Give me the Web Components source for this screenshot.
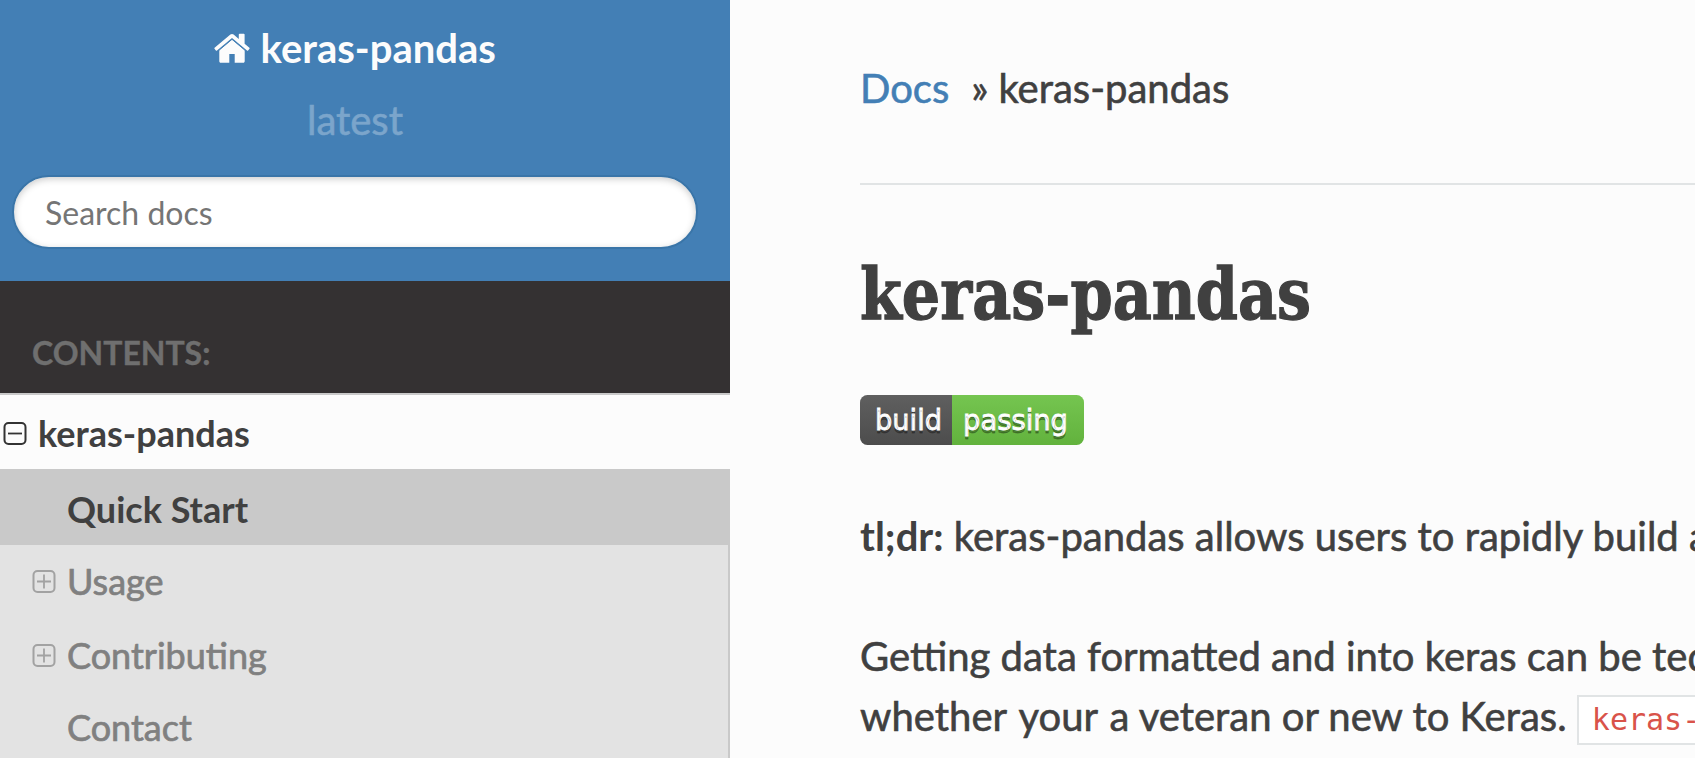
<!DOCTYPE html>
<html lang="en">
<head>
<meta charset="utf-8">
<title>keras-pandas</title>
<style>
html,body{margin:0;height:100%;overflow:hidden}
body{font-family:Lato,"Liberation Sans",sans-serif;font-size:40px;line-height:60px;color:#404040;background:#fcfcfc}
</style>
</head>
<body>
<docs-layout>
  <docs-sidebar slot="nav">
    <docs-search slot="head" project="keras-pandas" version="latest"></docs-search>
    <span slot="caption">Contents:</span>
    <toc-item level="1" icon="minus">keras-pandas</toc-item>
    <toc-item level="2" current>Quick Start</toc-item>
    <toc-item level="2" icon="plus" style="height:74px">Usage</toc-item>
    <toc-item level="2" icon="plus">Contributing</toc-item>
    <toc-item level="2">Contact</toc-item>
  </docs-sidebar>
  <docs-article></docs-article>
</docs-layout>
<script>
const define = (name, html, setup) => customElements.define(name, class extends HTMLElement {
  constructor(){ super(); this.attachShadow({mode:'open'}).innerHTML = html; }
  connectedCallback(){ if(setup) setup(this, this.shadowRoot); }
});

define('docs-layout', `<style>
:host{display:grid;grid-template-columns:730px 1fr;height:758px;overflow:hidden}
</style><slot name="nav"></slot><slot></slot>`);

define('docs-sidebar', `<style>
:host{display:flex;flex-direction:column;background:#e3e3e3;height:758px;overflow:hidden}
.cap{box-sizing:border-box;height:112px;padding:47px 0 0 32px;background:#343132;color:#6f6f6f;font-weight:700;font-size:32px;line-height:50px;text-transform:uppercase;-webkit-text-stroke:.4px;flex:none}
.menu{flex:1;min-height:0}
</style><slot name="head"></slot><div class="cap"><slot name="caption"></slot></div><div class="menu"><slot></slot></div>`);

define('docs-search', `<style>
:host{display:flex;flex-direction:column;box-sizing:border-box;height:281px;flex:none;background:#437fb5;padding:18px 24px 0 12px}
.title{display:flex;justify-content:center;align-items:center;height:60px;color:#fcfcfc;font-weight:700;margin-right:12px;margin-left:4px}
.title svg{width:36px;height:30px;margin:0 10.5px 1px 0}
.ver{height:60px;margin:12px 12px 0 4px;text-align:center;color:#7ba5cb;-webkit-text-stroke:.6px #7ba5cb}
.field{box-sizing:border-box;width:686px;height:74px;margin-top:25px;padding:0 31px;border:2px solid #3a75a8;border-radius:37px;background:#fff;box-shadow:inset 0 2px 7px #ccc;font:32px/72px Lato,sans-serif;color:#757575}
</style>
<div class="title"><svg viewBox="0 0 36 30"><path fill="#fcfcfc" d="M18 6.5 5.3 17v11.2c0 .9.6 1.5 1.4 1.5h8.6v-8.8h5.4v8.8h8.6c.8 0 1.4-.6 1.4-1.5V17z"/><path fill="#fcfcfc" d="m35.4 14.7-4.8-4V1.6c0-.5-.3-.8-.8-.8h-4.2c-.5 0-.8.3-.8.8v4.3l-5.2-4.4c-.9-.7-2.3-.7-3.2 0L.6 14.7c-.3.3-.4.7-.1 1.1l1.4 1.6c.3.3.8.4 1.1.1L18 5l15 12.5c.3.3.8.2 1.1-.1l1.4-1.6c.3-.4.2-.8-.1-1.1z"/><path fill="none" stroke="#437fb5" stroke-width="1" d="M4.6 17.6 18 6.3l13.4 11.3"/></svg><span id="p"></span></div>
<div class="ver" id="v"></div><div class="field">Search docs</div>`, (h, r) => {
  r.getElementById('p').textContent = h.getAttribute('project');
  r.getElementById('v').textContent = h.getAttribute('version');
});

define('toc-item', `<style>
:host{display:flex;align-items:flex-start;box-sizing:border-box;height:72px;padding:11px 0 0 32px;font-size:36px;line-height:50px;color:#808080;border-right:2px solid #c9c9c9;-webkit-text-stroke:.7px}
svg{width:24px;height:24px;flex:none;margin:14px 11px 0 0;stroke:#a2a2a2}
svg.none{visibility:hidden}
:host([level="1"]){height:76px;padding:13px 0 0 3px;border-top:2px solid #c9c9c9;border-right:0;background:#fcfcfc;color:#404040;font-weight:700;-webkit-text-stroke:0}
:host([level="1"]) svg{stroke:#333}
:host([current]){height:76px;padding-top:15px;background:#c9c9c9;color:#404040;font-weight:700;-webkit-text-stroke:0}
</style><svg viewBox="0 0 24 24" fill="none" stroke-width="2"><rect x="1.5" y="1" width="21" height="21" rx="4"/><path class="g" stroke-width="1.8"/></svg><slot></slot>`, (h, r) => {
  const icon = h.getAttribute('icon');
  if(!icon) r.querySelector('svg').classList.add('none');
  r.querySelector('.g').setAttribute('d', icon === 'plus' ? 'M5 11.5h14M12 4.5v14' : 'M5 11.5h14');
});

define('build-badge', `<style>:host{display:block;height:50px}svg{display:block}</style>
<svg width="224" height="50" font-family="DejaVu Sans,sans-serif" font-size="28">
<defs><linearGradient id="s" x2="0" y2="1"><stop offset="0" stop-color="#bbb" stop-opacity=".1"/><stop offset="1" stop-opacity=".1"/></linearGradient><clipPath id="c"><rect width="224" height="50" rx="7.5"/></clipPath></defs>
<g clip-path="url(#c)"><path fill="#555" d="M0 0h92v50H0z"/><path fill="#6dc644" d="M92 0h132v50H92z"/><path fill="url(#s)" d="M0 0h224v50H0z"/></g>
<g fill="#fff" stroke="#fff" stroke-width=".8" style="text-shadow:0 2.5px 0 rgba(1,1,1,.3)"><text x="15" y="35" textLength="67" lengthAdjust="spacingAndGlyphs">build</text><text x="103" y="35" textLength="105" lengthAdjust="spacingAndGlyphs">passing</text></g></svg>`);

define('docs-article', `<style>
:host{display:block;padding:58px 0 0 130px;white-space:nowrap;overflow:hidden;-webkit-text-stroke:.6px}
nav{display:flex;height:125px;border-bottom:2px solid #e1e4e5;box-sizing:content-box}
nav a{color:#437fb5;margin-right:22px}
nav i{font-style:normal;margin-right:10px}
h1{margin:67px 0 0;height:84px;font:700 71px/84px "Roboto Slab","DejaVu Serif",serif;width:max-content;transform-origin:0 0;transform:scaleX(.851);-webkit-text-stroke:1.3px}
build-badge{margin-top:59px}
p{margin:0 0 60px}
p.first{margin-top:61px}
p span{margin-left:2px}
b{-webkit-text-stroke:0}
code{display:inline-block;box-sizing:border-box;height:50px;padding:0 13px;border:2px solid #e1e4e5;background:#fff;color:#d9534a;font:30px/46px "DejaVu Sans Mono",monospace;vertical-align:1px;-webkit-text-stroke:0}
</style>
<nav><a>Docs</a><i>»</i><span>keras-pandas</span></nav>
<h1>keras-pandas</h1>
<build-badge></build-badge>
<p class="first"><b>tl;dr:</b> keras-pandas allows users to rapidly build a</p>
<p>Getting data formatted and into keras can be tedious,<br>whether <span>your <span>a veteran or new to Keras.</span></span> <code>keras-pandas</code></p>`);
</script>
</body>
</html>
